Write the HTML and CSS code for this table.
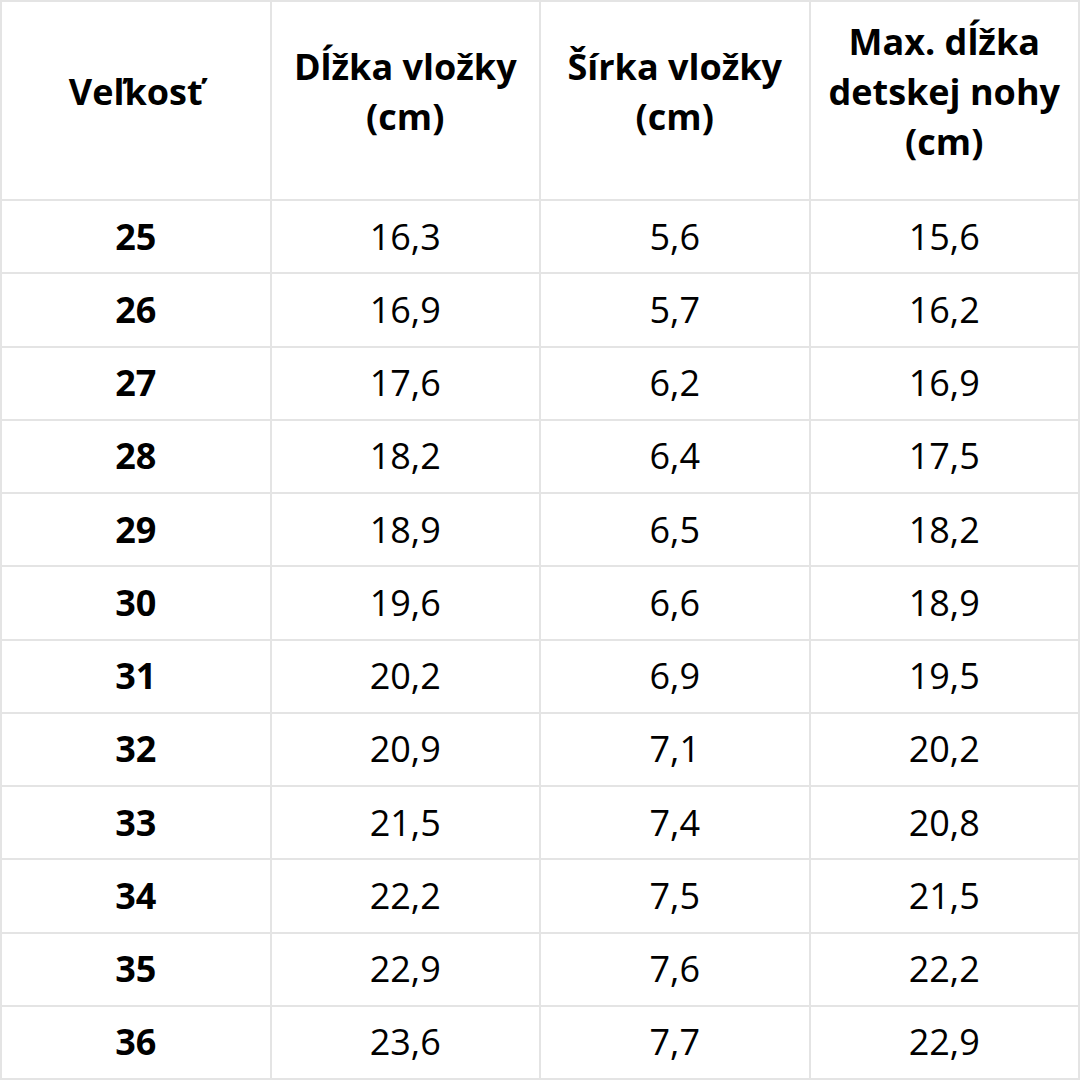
FILE: index.html
```html
<!DOCTYPE html>
<html lang="sk">
<head>
<meta charset="utf-8">
<link rel="stylesheet" href="styles.css">
</head>
<body>
<table class="sizes">
  <thead>
    <tr>
      <th>Veľkosť</th>
      <th>Dĺžka vložky<br>(cm)</th>
      <th>Šírka vložky<br>(cm)</th>
      <th>Max. dĺžka<br>detskej nohy<br>(cm)</th>
    </tr>
  </thead>
  <tbody>
    <tr><td class="size">25</td><td>16,3</td><td>5,6</td><td>15,6</td></tr>
    <tr><td class="size">26</td><td>16,9</td><td>5,7</td><td>16,2</td></tr>
    <tr><td class="size">27</td><td>17,6</td><td>6,2</td><td>16,9</td></tr>
    <tr><td class="size">28</td><td>18,2</td><td>6,4</td><td>17,5</td></tr>
    <tr><td class="size">29</td><td>18,9</td><td>6,5</td><td>18,2</td></tr>
    <tr><td class="size">30</td><td>19,6</td><td>6,6</td><td>18,9</td></tr>
    <tr><td class="size">31</td><td>20,2</td><td>6,9</td><td>19,5</td></tr>
    <tr><td class="size">32</td><td>20,9</td><td>7,1</td><td>20,2</td></tr>
    <tr><td class="size">33</td><td>21,5</td><td>7,4</td><td>20,8</td></tr>
    <tr><td class="size">34</td><td>22,2</td><td>7,5</td><td>21,5</td></tr>
    <tr><td class="size">35</td><td>22,9</td><td>7,6</td><td>22,2</td></tr>
    <tr><td class="size">36</td><td>23,6</td><td>7,7</td><td>22,9</td></tr>
  </tbody>
</table>
</body>
</html>
```
FILE: styles.css
```css
html, body {
  margin: 0;
  padding: 0;
  background: #ffffff;
}
body {
  width: 1080px;
  height: 1080px;
  font-family: "Open Sans", "Liberation Sans", sans-serif;
  color: #000;
}
.sizes {
  width: 1080px;
  height: 1080px;
  border-collapse: collapse;
  table-layout: fixed;
}
.sizes th,
.sizes td {
  border: 2px solid #e4e4e4;
  text-align: center;
  vertical-align: middle;
  padding: 0;
}
.sizes th {
  height: 179px;
  padding-bottom: 18px;
  font-size: 36px;
  font-weight: 700;
  line-height: 50px;
}
.sizes td {
  height: 71px;
  font-size: 36px;
  font-weight: 400;
  line-height: 40px;
}
.sizes td.size {
  font-weight: 700;
}
```
